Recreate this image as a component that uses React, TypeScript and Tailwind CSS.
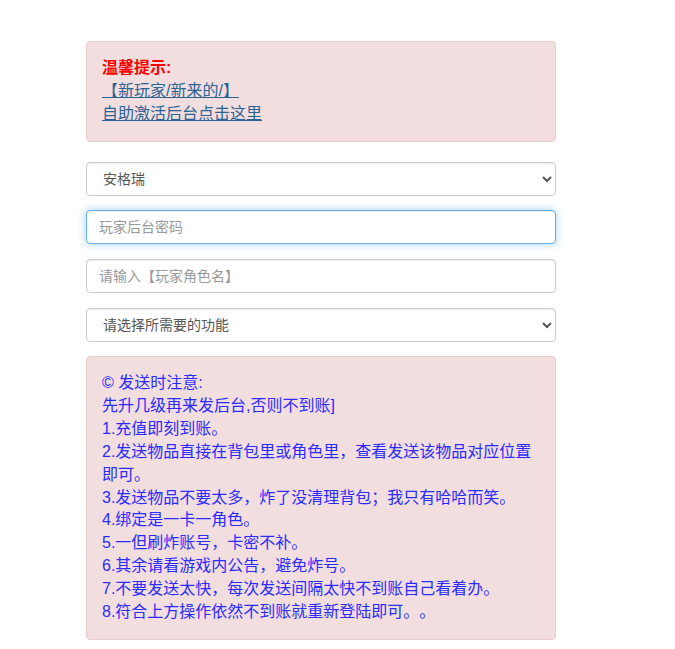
export default function App() {
  const notes = [
    "© 发送时注意:",
    "先升几级再来发后台,否则不到账]",
    "1.充值即刻到账。",
    "2.发送物品直接在背包里或角色里，查看发送该物品对应位置即可。",
    "3.发送物品不要太多，炸了没清理背包；我只有哈哈而笑。",
    "4.绑定是一卡一角色。",
    "5.一但刷炸账号，卡密不补。",
    "6.其余请看游戏内公告，避免炸号。",
    "7.不要发送太快，每次发送间隔太快不到账自己看着办。",
    "8.符合上方操作依然不到账就重新登陆即可。。",
  ];

  return (
    <div
      className="min-h-screen bg-white text-[14px] leading-[1.42857] text-[#333] [text-spacing-trim:space-all]"
      style={{ fontFamily: '"Liberation Sans", "Noto Sans CJK SC", sans-serif' }}
    >
      <div className="ml-[86px] w-[470px] pt-[41px] pb-[9px]">
        {/* 提示 */}
        <div className="mb-[20px] rounded border border-[#ebccd1] bg-[#f2dede] p-[15px] text-[16px]">
          <div className="font-bold text-[#ff0000]">温馨提示:</div>
          <a href="#" className="block w-fit text-[#2a6496] underline">
            【新玩家/新来的/】
          </a>
          <a href="#" className="block w-fit text-[#2a6496] underline">
            自助激活后台点击这里
          </a>
        </div>

        <div className="mb-[14.7px]">
          <select className="h-[34px] w-full rounded border border-[#ccc] bg-white px-[12px] text-[14px] text-[#555] shadow-[inset_0_1px_1px_rgba(0,0,0,0.075)]">
            <option>安格瑞</option>
          </select>
        </div>

        <div className="mb-[14.7px]">
          <input
            type="password"
            placeholder="玩家后台密码"
            className="h-[34px] w-full rounded border border-[#66afe9] bg-white px-[12px] text-[14px] text-[#555] outline-none placeholder:text-[#999] shadow-[inset_0_1px_1px_rgba(0,0,0,0.075),0_0_8px_rgba(102,175,233,0.6)]"
          />
        </div>

        <div className="mb-[14.7px]">
          <input
            type="text"
            placeholder="请输入【玩家角色名】"
            className="h-[34px] w-full rounded border border-[#ccc] bg-white px-[12px] text-[14px] text-[#555] outline-none placeholder:text-[#999] shadow-[inset_0_1px_1px_rgba(0,0,0,0.075)]"
          />
        </div>

        <div className="mb-[14.7px]">
          <select className="h-[34px] w-full rounded border border-[#ccc] bg-white px-[12px] text-[14px] text-[#555] shadow-[inset_0_1px_1px_rgba(0,0,0,0.075)]">
            <option>请选择所需要的功能</option>
          </select>
        </div>

        {/* 注意事项 */}
        <div className="rounded border border-[#ebccd1] bg-[#f2dede] p-[15px] text-[16px] text-[#2b2bff]">
          {notes.map((n) => (
            <div key={n}>{n}</div>
          ))}
        </div>
      </div>
    </div>
  );
}
